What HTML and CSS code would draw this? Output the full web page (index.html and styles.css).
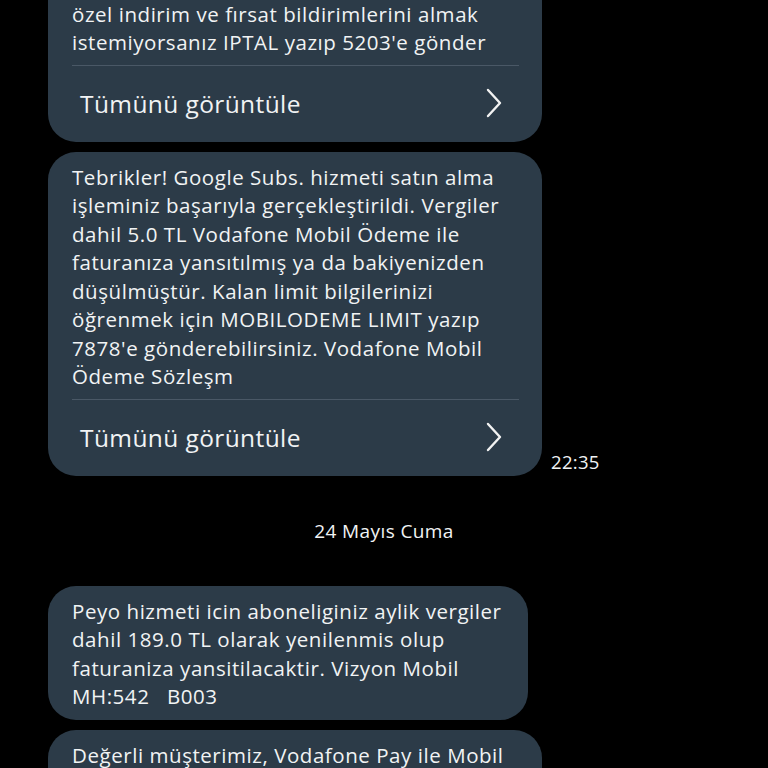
FILE: index.html
```html
<!DOCTYPE html>
<html lang="tr">
<head>
<meta charset="utf-8">
<title>Mesajlar</title>
<link rel="stylesheet" href="styles.css">
</head>
<body>
<main class="thread">
  <div class="row">
    <div class="bubble bubble-first">
      <div class="text">Vodafone'dan size özel kampanyalar ve<br>özel indirim ve fırsat bildirimlerini almak<br>istemiyorsanız IPTAL yazıp 5203'e gönder</div>
      <div class="more">
        <span>Tümünü görüntüle</span>
        <svg class="chev" width="18" height="30" viewBox="0 0 18 30"><polyline points="3,2 15,15 3,28" fill="none" stroke="#f2f2f2" stroke-width="2.4" stroke-linecap="round" stroke-linejoin="round"/></svg>
      </div>
    </div>
  </div>

  <div class="row">
    <div class="bubble">
      <div class="text">Tebrikler! Google Subs. hizmeti satın alma<br>işleminiz başarıyla gerçekleştirildi. Vergiler<br>dahil 5.0 TL Vodafone Mobil Ödeme ile<br>faturanıza yansıtılmış ya da bakiyenizden<br>düşülmüştür. Kalan limit bilgilerinizi<br>öğrenmek için MOBILODEME LIMIT yazıp<br>7878'e gönderebilirsiniz. Vodafone Mobil<br>Ödeme Sözleşm</div>
      <div class="more">
        <span>Tümünü görüntüle</span>
        <svg class="chev" width="18" height="30" viewBox="0 0 18 30"><polyline points="3,2 15,15 3,28" fill="none" stroke="#f2f2f2" stroke-width="2.4" stroke-linecap="round" stroke-linejoin="round"/></svg>
      </div>
    </div>
    <span class="time">22:35</span>
  </div>

  <div class="date">24 Mayıs Cuma</div>

  <div class="row">
    <div class="bubble bubble-short">
      <div class="text">Peyo hizmeti icin aboneliginiz aylik vergiler<br>dahil 189.0 TL olarak yenilenmis olup<br>faturaniza yansitilacaktir. Vizyon Mobil<br>MH:542 &nbsp; B003</div>
    </div>
  </div>

  <div class="row">
    <div class="bubble">
      <div class="text">Değerli müşterimiz, Vodafone Pay ile Mobil<br>Ödeme hizmetinizi kullanarak alışveriş</div>
    </div>
  </div>
</main>
</body>
</html>
```

FILE: styles.css
```css
html, body {
  margin: 0;
  padding: 0;
  background: #000;
  height: 768px;
  overflow: hidden;
}

body {
  font-family: "Open Sans", "DejaVu Sans", sans-serif;
  color: #f1f3f4;
}

.thread {
  display: flex;
  flex-direction: column;
  gap: 10px;
  padding-left: 48px;
  margin-top: -40px;
}

.row {
  display: flex;
  align-items: flex-end;
  gap: 9px;
}

.bubble {
  width: 494px;
  box-sizing: border-box;
  background: #2c3b48;
  border-radius: 28px;
  padding: 11px 0 9px;
}

.bubble-short {
  width: 480px;
}

.text {
  padding: 0 20px 0 24px;
  font-size: 20.5px;
  line-height: 28.5px;
  white-space: nowrap;
  letter-spacing: 0.55px;
}

.more {
  margin: 8px 23px 0 24px;
  border-top: 1.5px solid #4a5866;
  height: 68px;
  box-sizing: border-box;
  display: flex;
  align-items: center;
  justify-content: space-between;
  padding: 8px 16px 0 8px;
  font-size: 24.5px;
  letter-spacing: 0.4px;
}

.chev {
  display: block;
}

.time {
  font-size: 18.5px;
  line-height: 20px;
  padding-bottom: 4px;
  letter-spacing: 0.3px;
}

.date {
  text-align: center;
  font-size: 19px;
  line-height: 24px;
  padding: 33px 0;
  margin-left: -48px;
  letter-spacing: 0.4px;
}
```
